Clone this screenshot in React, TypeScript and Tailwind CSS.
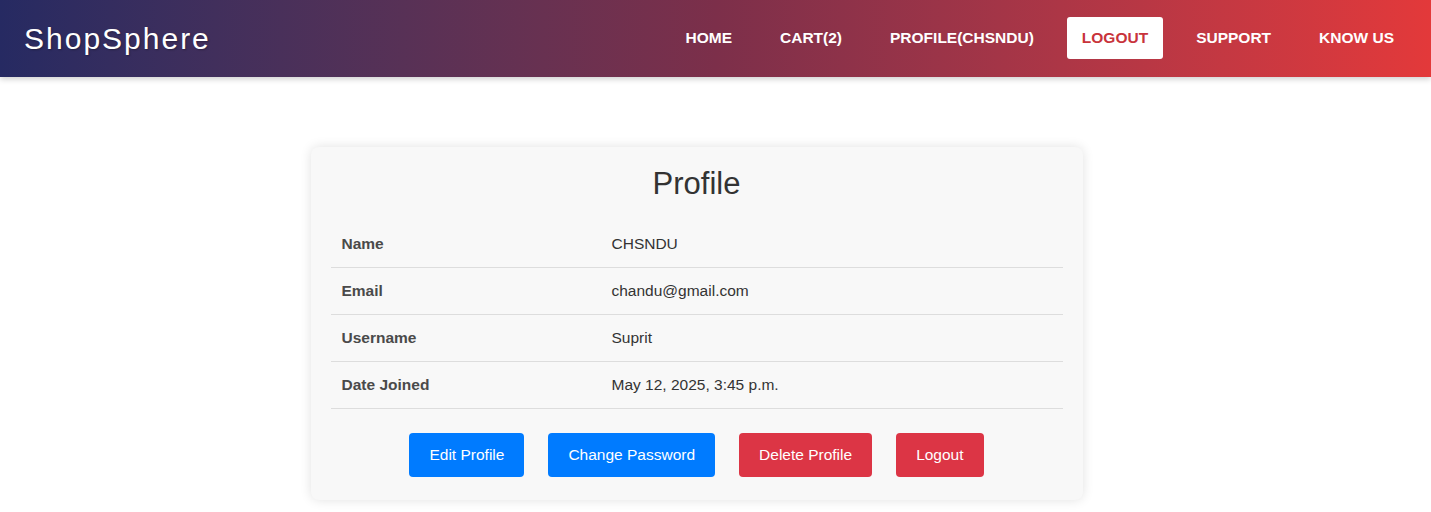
const navItems = ['HOME', 'CART(2)', 'PROFILE(CHSNDU)', 'LOGOUT', 'SUPPORT', 'KNOW US']

const rows = [
  { label: 'Name', value: 'CHSNDU' },
  { label: 'Email', value: 'chandu@gmail.com' },
  { label: 'Username', value: 'Suprit' },
  { label: 'Date Joined', value: 'May 12, 2025, 3:45 p.m.' },
]

export default function App() {
  return (
    <div className="min-h-screen bg-white font-['Liberation_Sans',Arial,sans-serif]">
      <nav className="h-[77px] flex items-center justify-between pl-6 pr-[22px] bg-gradient-to-r from-[#262a62] via-[#7c2f4a] to-[#e3393a] shadow-[0_2px_6px_rgba(0,0,0,0.2)]">
        <h1 className="text-[30px] tracking-[2px] text-white [text-shadow:1px_1px_2px_rgba(0,0,0,0.3)]">ShopSphere</h1>
        <ul className="flex items-center gap-[18px] -mt-px">
          {navItems.map((item) => (
            <li key={item}>
              <a
                href="#"
                className={
                  item === 'LOGOUT'
                    ? 'block px-[15px] leading-[42px] rounded-[3px] bg-white text-[#c8333b] text-[15.5px] font-bold'
                    : 'block px-[15px] leading-[42px] text-white text-[15.5px] font-bold'
                }
              >
                {item}
              </a>
            </li>
          ))}
        </ul>
      </nav>

      <main className="pt-[70px] flex justify-center pr-[38px]">
        <div className="w-[772px] bg-[#f8f8f8] rounded-lg shadow-[0_0_12px_rgba(0,0,0,0.12)] px-5 pt-[18px] pb-[23px]">
          <h2 className="text-center text-[31px] leading-[38px] text-[#333] mb-[18px]">Profile</h2>
          <table className="w-full border-collapse">
            <tbody>
              {rows.map((r) => (
                <tr key={r.label} className="border-b border-[#dddddd]">
                  <th className="w-[281px] text-left px-[11px] py-3 text-[15.5px] leading-[22px] font-bold text-[#4a4a4a]">
                    {r.label}
                  </th>
                  <td className="text-left px-0 py-3 text-[15.5px] leading-[22px] text-[#333]">{r.value}</td>
                </tr>
              ))}
            </tbody>
          </table>
          <div className="mt-6 flex justify-center gap-6">
            <button className="h-11 px-5 rounded bg-[#007bff] text-white text-[15.5px]">Edit Profile</button>
            <button className="h-11 px-5 rounded bg-[#007bff] text-white text-[15.5px]">Change Password</button>
            <button className="h-11 px-5 rounded bg-[#dc3545] text-white text-[15.5px]">Delete Profile</button>
            <button className="h-11 px-5 rounded bg-[#dc3545] text-white text-[15.5px]">Logout</button>
          </div>
        </div>
      </main>
    </div>
  )
}
